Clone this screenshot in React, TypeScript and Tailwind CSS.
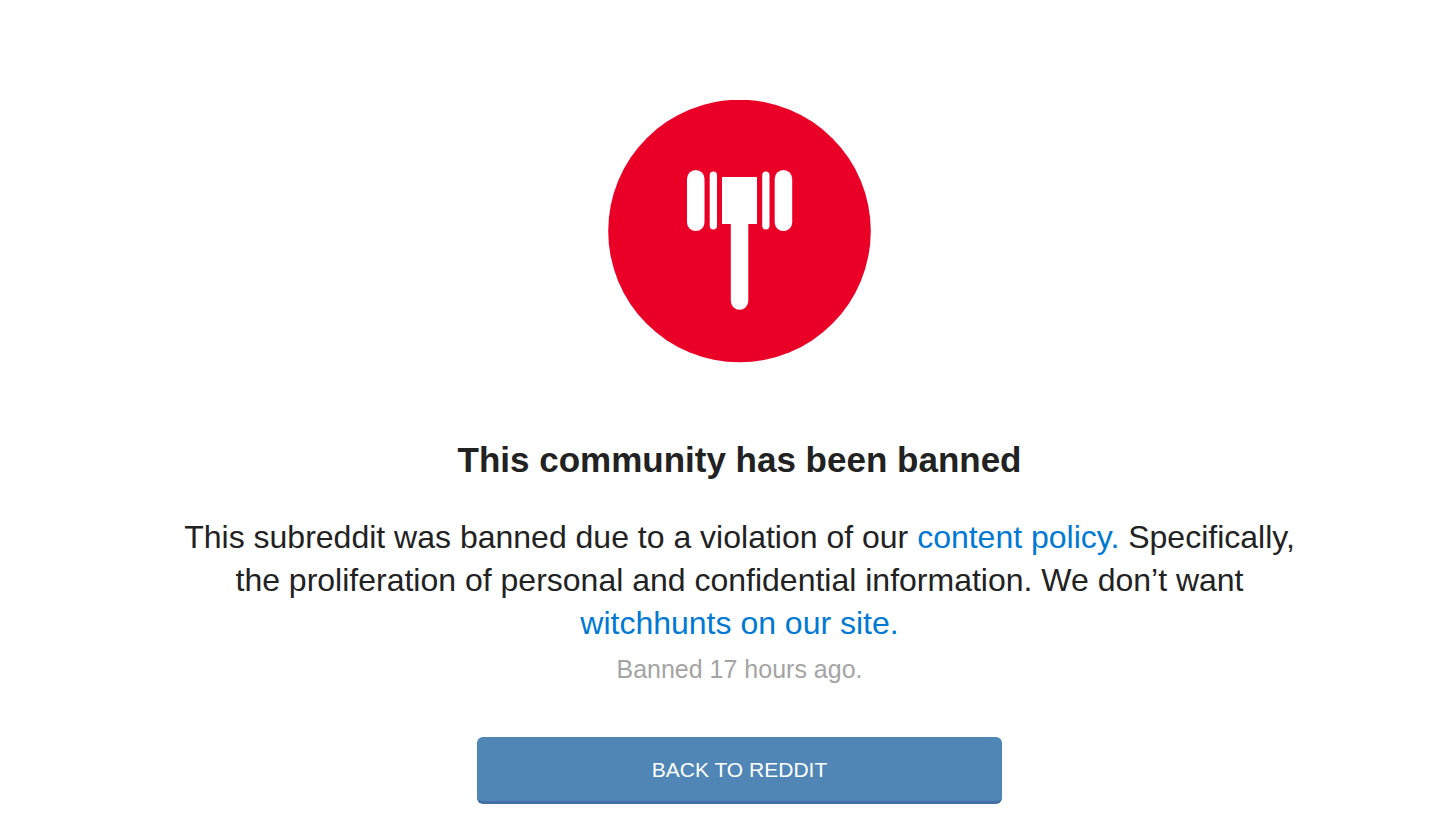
function GavelIcon() {
  return (
    <svg viewBox="0 0 263 263" className="size-[263px]" aria-hidden="true">
      <circle cx="131.5" cy="131" r="131.3" fill="#ea0027" />
      <g fill="#fff">
        <rect x="79" y="70" width="17.5" height="61" rx="8.75" />
        <rect x="101.7" y="71.5" width="7.3" height="58" rx="3.65" />
        <rect x="154.2" y="71.5" width="7.3" height="58" rx="3.65" />
        <rect x="166.7" y="70" width="17.5" height="61" rx="8.75" />
        <path d="M114 77h35v47h-8.7v77a8.75 8.75 0 0 1-17.5 0v-77H114z" />
      </g>
    </svg>
  );
}

export default function App() {
  return (
    <main className="flex min-h-screen flex-col items-center bg-white pt-[100px] pl-[31px] font-['Liberation_Sans',Arial,sans-serif] text-[#222222]">
      <GavelIcon />

      <h1 className="mt-[75px] text-center text-[35px] leading-[44px] font-bold">
        This community has been banned
      </h1>

      <p className="mt-[34px] max-w-[1120px] text-center text-[32px] leading-[43px]">
        This subreddit was banned due to a violation of our{' '}
        <a href="#content-policy" className="text-[#0079d3]">
          content policy.
        </a>{' '}
        Specifically, the proliferation of personal and confidential information. We don’t want{' '}
        <a href="#witchhunts" className="text-[#0079d3]">
          witchhunts on our site.
        </a>
      </p>
      <p className="mt-2 text-center text-[25px] leading-8 text-[#a5a4a4]">Banned 17 hours ago.</p>

      <a
        href="#home"
        className="mt-[52px] w-full max-w-[525px] rounded-md border-b-3 border-[#4270a6] bg-[#4f86b5] pt-[17px] pb-[15px] text-center text-[21px] leading-8 text-white uppercase"
      >
        Back to Reddit
      </a>
    </main>
  );
}
